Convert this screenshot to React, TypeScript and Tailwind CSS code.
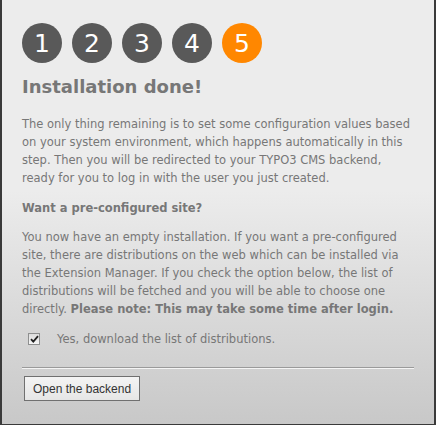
import React from "react";

export default function App() {
  const steps = [1, 2, 3, 4, 5];
  return (
    <div
      className="w-[436px] h-[425px] border-l-2 border-r-2 border-b border-[#3a3a3a] bg-[linear-gradient(to_bottom,#ececec_0%,#ececec_45%,#c8c8c8_100%)] overflow-hidden"
      style={{ fontFamily: '"DejaVu Sans", Verdana, sans-serif' }}
    >
      <div className="pl-[20px] pr-[20px] pt-[23px]">
        <div className="flex gap-[10px]">
          {steps.map((n) => (
            <div
              key={n}
              className={
                n === 5
                  ? "w-[40px] h-[40px] rounded-full bg-[#ff8700] text-white flex items-center justify-center text-[25px] leading-none"
                  : "w-[40px] h-[40px] rounded-full bg-[#595959] text-white flex items-center justify-center text-[25px] leading-none"
              }
            >
              {n}
            </div>
          ))}
        </div>
        <h1 className="mt-[13px] text-[18px] leading-[22px] font-bold text-[#777777]">
          Installation done!
        </h1>
        <p className="mt-[17px] text-[11.5px] leading-[18px] text-[#777777] whitespace-nowrap">
          The only thing remaining is to set some configuration values based
          <br />
          on your system environment, which happens automatically in this
          <br />
          step. Then you will be redirected to your TYPO3 CMS backend,
          <br />
          ready for you to log in with the user you just created.
        </p>
        <h2 className="mt-[12px] text-[11.5px] leading-[18px] font-bold text-[#777777]">
          Want a pre-configured site?
        </h2>
        <p className="mt-[11px] text-[11.5px] leading-[18px] text-[#777777] whitespace-nowrap">
          You now have an empty installation. If you want a pre-configured
          <br />
          site, there are distributions on the web which can be installed via
          <br />
          the Extension Manager. If you check the option below, the list of
          <br />
          distributions will be fetched and you will be able to choose one
          <br />
          directly. <b>Please note: This may take some time after login.</b>
        </p>
        <label className="mt-[12px] flex items-center text-[11.5px] leading-[18px] text-[#777777]">
          <span className="ml-[6px] w-[12px] h-[12px] border border-[#8e8f8f] bg-[linear-gradient(to_bottom,#dcdcdc,#f6f6f6)] flex items-center justify-center">
            <svg width="9" height="8" viewBox="0 0 9 8">
              <path d="M1 4.2 L3.3 6.6 L8 1.2" fill="none" stroke="#222" strokeWidth="1.8" />
            </svg>
          </span>
          <span className="ml-[17px]">Yes, download the list of distributions.</span>
        </label>
        <div className="mt-[19px] w-[392px] border-t border-t-[#9a9a9a] border-b border-b-[#f4f4f4]" />
        <button
          className="mt-[7px] ml-[2px] h-[25px] px-[8px] border border-[#707070] bg-[linear-gradient(to_bottom,#f4f4f4,#e6e6e6)] text-[12px] text-[#333333]"
          style={{ fontFamily: '"Liberation Sans", Arial, sans-serif' }}
        >
          Open the backend
        </button>
      </div>
    </div>
  );
}
